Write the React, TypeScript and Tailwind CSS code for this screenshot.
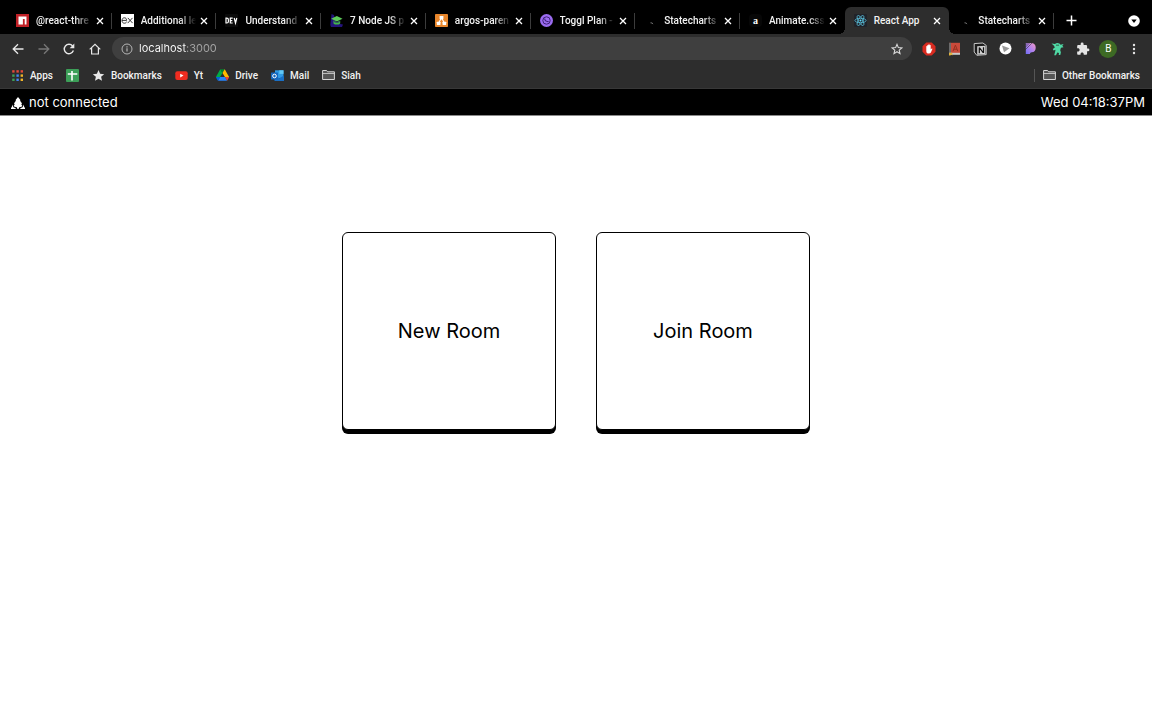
import type { ReactNode } from "react";

/* ---------- favicons ---------- */

const NpmIcon = () => (
  <svg viewBox="0 0 13 13" className="size-[13px]">
    <rect width="13" height="13" fill="#c12127" />
    <path d="M2.5 2.5h8v8H8.700V4.900H6.900v5.600H2.500z" fill="#fff" />
  </svg>
);

const ExpressIcon = () => (
  <svg viewBox="0 0 13 13" className="size-[13px]">
    <rect width="13" height="13" fill="#fff" />
    <path d="M1 6.400h4.600C5.600 4.600 4.700 3.800 3.400 3.800 1.900 3.800 1 4.900 1 6.500s.9 2.700 2.400 2.700c1.100 0 1.900-.5 2.200-1.500M6.800 3.900l4.800 5.200M11.500 3.900L6.700 9.100" fill="none" stroke="#222" strokeWidth=".9" />
  </svg>
);

const DevIcon = () => (
  <svg viewBox="0 0 13 13" className="size-[13px]">
    <rect width="13" height="13" rx="1" fill="#0b0b0b" />
    <path d="M1 4.200v4.800h.8c1.100 0 1.600-.6 1.600-1.500V5.700c0-.9-.5-1.500-1.600-1.500zM7.700 4.200H5.300v4.800h2.400M5.300 6.600h2M9.200 4l1.300 5 1.300-5" fill="none" stroke="#fff" strokeWidth="1.200" />
  </svg>
);

const NodeCourseIcon = () => (
  <svg viewBox="0 0 13 13" className="size-[13px]">
    <path d="M1.500 0L4 1l2 8 7 1.500-1 2.500H1L.3 11z" fill="#24137a" />
    <path d="M6.800 2l5.700 2.700-5.700 2.700-5.600-2.700z" fill="#5ecb5a" />
    <path d="M3.500 6.400l3.300 1.500 3.400-1.500v3c-1.500 1.600-5.200 1.600-6.700 0z" fill="#43b649" />
    <path d="M4 7.500c1.600 1 4.200 1 5.700 0" fill="none" stroke="#24137a" strokeWidth=".8" />
  </svg>
);

const DrawioIcon = () => (
  <svg viewBox="0 0 13 13" className="size-[13px]">
    <rect width="13" height="13" rx=".8" fill="#e8862b" />
    <path d="M6.500 4L3.500 9M6.500 4l3 5" stroke="#fff" strokeWidth="1.100" />
    <rect x="4.600" y="2" width="3.800" height="3.200" rx=".4" fill="#fff" />
    <rect x="1.800" y="7.800" width="3.700" height="3.200" rx=".4" fill="#fff" />
    <rect x="7.500" y="7.800" width="3.700" height="3.200" rx=".4" fill="#fff" />
  </svg>
);

const TogglIcon = () => (
  <svg viewBox="0 0 13 13" className="size-[13px]">
    <circle cx="6.500" cy="6.500" r="6.500" fill="#9b6cf0" />
    <circle cx="6.500" cy="6.500" r="3.700" fill="none" stroke="#3f2177" strokeWidth="1" />
    <path d="M4.600 4.500c.3 2.200 1.700 3.200 4 3.100" fill="none" stroke="#3f2177" strokeWidth="1.100" />
  </svg>
);

const LoadingIcon = () => (
  <svg viewBox="0 0 13 13" className="size-[13px]">
    <path d="M6.500 8.800q1.800-.2 2.600 1.200" fill="none" stroke="#777" strokeWidth="1" />
  </svg>
);

const AnimateIcon = () => (
  <span className="flex size-[13px] items-center justify-center rounded-sm bg-[#070707] font-['Liberation_Serif',serif] text-[10px] leading-none font-bold text-white">
    a
  </span>
);

const ReactIcon = () => (
  <svg viewBox="0 0 13 13" className="size-[13px]">
    <rect width="13" height="13" rx="1" fill="#20232a" />
    <g fill="none" stroke="#5bc4e0" strokeWidth=".75">
      <ellipse cx="6.500" cy="6.500" rx="5.600" ry="2.200" />
      <ellipse cx="6.500" cy="6.500" rx="5.600" ry="2.200" transform="rotate(60 6.500 6.500)" />
      <ellipse cx="6.500" cy="6.500" rx="5.600" ry="2.200" transform="rotate(120 6.500 6.500)" />
    </g>
    <circle cx="6.500" cy="6.500" r="1" fill="#61dafb" />
  </svg>
);

/* ---------- tabs ---------- */

type TabInfo = { title: string; icon: ReactNode; active?: boolean; divider?: boolean };

const tabs: TabInfo[] = [
  { title: "@react-thre", icon: <NpmIcon />, divider: true },
  { title: "Additional le", icon: <ExpressIcon />, divider: true },
  { title: "Understand", icon: <DevIcon />, divider: true },
  { title: "7 Node JS p", icon: <NodeCourseIcon />, divider: true },
  { title: "argos-paren", icon: <DrawioIcon />, divider: true },
  { title: "Toggl Plan -", icon: <TogglIcon />, divider: true },
  { title: "Statecharts", icon: <LoadingIcon />, divider: true },
  { title: "Animate.css", icon: <AnimateIcon /> },
  { title: "React App", icon: <ReactIcon />, active: true },
  { title: "Statecharts", icon: <LoadingIcon />, divider: true },
];

const Tab = ({ title, icon, active, divider }: TabInfo) => (
  <div
    role="tab"
    aria-selected={!!active}
    className={`relative flex h-[27px] min-w-0 flex-1 items-center pl-[9px] ${active ? "rounded-t-[6px] bg-[#2d2d2d]" : ""}`}
  >
    {active && (
      <>
        <span className="absolute bottom-0 -left-[6px] size-[6px] bg-[radial-gradient(circle_at_0_0,transparent_6px,#2d2d2d_6px)]" />
        <span className="absolute -right-[6px] bottom-0 size-[6px] bg-[radial-gradient(circle_at_100%_0,transparent_6px,#2d2d2d_6px)]" />
      </>
    )}
    <span className="shrink-0">{icon}</span>
    <span
      className={`ml-[7px] min-w-0 flex-1 whitespace-nowrap ${active ? "" : "[mask-image:linear-gradient(to_right,#000_70%,transparent)]"}`}
    >
      {title}
    </span>
    <button type="button" aria-label={`Close ${title}`} className="mr-1 ml-px flex size-[14px] shrink-0 items-center justify-center">
      <svg viewBox="0 0 8 8" className="size-2">
        <path d="M1 1l6 6M7 1L1 7" stroke="#fff" strokeWidth="1.300" />
      </svg>
    </button>
    <span className={`h-4 w-px shrink-0 ${divider ? "bg-[#3c3c3c]" : ""}`} />
  </div>
);

/* ---------- toolbar ---------- */

const ToolButton = ({ label, children }: { label: string; children: ReactNode }) => (
  <button type="button" aria-label={label} className="flex items-center justify-center">
    {children}
  </button>
);

const Nav = () => (
  <div className="grid w-[103px] shrink-0 grid-cols-4">
    <ToolButton label="Back">
      <svg viewBox="0 0 12 12" className="size-3" fill="none" stroke="#e8e8e8" strokeWidth="1.300">
        <path d="M11.500 6H1.500M6 1.200L1.200 6 6 10.800" />
      </svg>
    </ToolButton>
    <ToolButton label="Forward">
      <svg viewBox="0 0 12 12" className="size-3" fill="none" stroke="#777" strokeWidth="1.300">
        <path d="M.5 6h10M6 1.200L10.800 6 6 10.800" />
      </svg>
    </ToolButton>
    <ToolButton label="Reload">
      <svg viewBox="0 0 12 12" className="size-3" fill="none" stroke="#e8e8e8" strokeWidth="1.400">
        <path d="M10.400 7.600A4.700 4.700 0 1 1 9.600 3" />
        <path d="M11.300.6v4.600H6.700z" fill="#e8e8e8" stroke="none" />
      </svg>
    </ToolButton>
    <ToolButton label="Home">
      <svg viewBox="0 0 12 12" className="size-3" fill="none" stroke="#e8e8e8" strokeWidth="1.200">
        <path d="M.7 6.400L6 1.300l5.300 5.100M2.600 5v6h6.800V5" />
      </svg>
    </ToolButton>
  </div>
);

const Extensions = () => (
  <div className="grid w-[231px] shrink-0 grid-cols-9">
    <ToolButton label="Ad blocker">
      <svg viewBox="0 0 14 14" className="size-[14px]">
        <path d="M4.300.5h5.400l3.800 3.800v5.400l-3.800 3.800H4.300L.5 9.700V4.300z" fill="#d92b20" />
        <path d="M4.300 4.300q.5-.6 1 0V3.200q.5-.6 1.100 0v-.6q.6-.6 1.200 0v.7q.6-.6 1.100 0V7.500l1-1q.9-.2.700.6L8.900 10.600q-.6.900-2 .9-2.600 0-2.600-2.600z" fill="#fff" />
      </svg>
    </ToolButton>
    <ToolButton label="Dictionary">
      <svg viewBox="0 0 13 14" className="h-[14px] w-[13px]">
        <rect x="1" y=".8" width="11" height="10.200" fill="#c94a3b" />
        <rect x="1" y=".8" width="2" height="12" fill="#6b6b6b" />
        <rect x="1.500" y="10.800" width="10.500" height="2" fill="#c9c9c9" />
        <path d="M1 10.800h3.300v2.700l-1-.7-1 .7H1z" fill="#e2b33c" />
        <path d="M5 9.200l2.400-6 2.400 6M5.800 7.200h3.200" fill="none" stroke="#96301f" strokeWidth="1" />
      </svg>
    </ToolButton>
    <ToolButton label="Notion">
      <svg viewBox="0 0 14 14" className="size-[14px]">
        <path d="M1.200 1.600L9.900 1l3.300 2.400v9.200l-9.400.7L1.200 10z" fill="#1c1c1c" stroke="#d8d8d8" strokeWidth=".9" />
        <path d="M4.200 4.300l8.300-.5v8.300l-8.300.6z" fill="#d0d0d0" />
        <path d="M6.300 5.500l3.900 5.200M6.300 5.500v5.800M10.500 5.300v5.600" fill="none" stroke="#111" strokeWidth="1.200" />
      </svg>
    </ToolButton>
    <ToolButton label="Player">
      <svg viewBox="0 0 13 13" className="size-[13px]">
        <circle cx="6.500" cy="6.500" r="6" fill="#fff" />
        <path d="M3 3.500l7.500 2.800L5 10.300z" fill="#999" />
      </svg>
    </ToolButton>
    <ToolButton label="Pattern">
      <svg viewBox="0 0 12 13" className="h-[13px] w-3">
        <defs>
          <linearGradient id="patternFill" x1="1" y1="0" x2="0" y2="1">
            <stop offset="0" stopColor="#f59ac0" />
            <stop offset=".5" stopColor="#b282ee" />
            <stop offset="1" stopColor="#6f6df2" />
          </linearGradient>
        </defs>
        <path d="M.8 1h5.900a4.700 4.700 0 0 1 0 9.300Q5 10.500 4.800 12H.8z" fill="url(#patternFill)" />
        <path d="M0 5.500L5 .5M0 8L7 1M.5 3L3 .5" stroke="#2d2d2d" strokeWidth=".6" />
      </svg>
    </ToolButton>
    <ToolButton label="Ninja">
      <svg viewBox="0 0 13 14" className="h-[14px] w-[13px]">
        <path d="M.5 1.500l3.500.4Q6 .5 8.400 1.600l1.200 1.200 3-.8-1.300 1.800 1.200 1.500-2.600.4-.7 2.600.7 2-.6 2.700H7.700l.3-2-1.700-.5-1.300 2.700H3.200l1-3.700.3-1.800-2 .8-.7-1.400 2-1.600L3 3.700z" fill="#4fd8a4" />
        <path d="M5 3.200h3" stroke="#2d2d2d" strokeWidth=".7" />
      </svg>
    </ToolButton>
    <ToolButton label="Extensions">
      <svg viewBox="0 0 24 24" className="size-[14px]" fill="#e4e4e4">
        <path d="M20.500 11H19V7c0-1.100-.9-2-2-2h-4V3.500a2.500 2.500 0 0 0-5 0V5H4c-1.100 0-1.990.9-1.990 2v3.800H3.500c1.490 0 2.700 1.210 2.700 2.700s-1.210 2.700-2.700 2.700H2V20c0 1.100.9 2 2 2h3.800v-1.500c0-1.490 1.210-2.700 2.700-2.700 1.490 0 2.700 1.210 2.700 2.700V22H17c1.100 0 2-.9 2-2v-4h1.500a2.500 2.500 0 0 0 0-5z" />
      </svg>
    </ToolButton>
    <button type="button" aria-label="Profile" className="flex items-center justify-center">
      <span className="flex size-[18px] items-center justify-center rounded-full bg-[#3d6a24] text-[10px] font-normal text-white">B</span>
    </button>
    <ToolButton label="Menu">
      <svg viewBox="0 0 4 12" className="h-3 w-1" fill="#e4e4e4">
        <circle cx="2" cy="2" r="1.200" />
        <circle cx="2" cy="6" r="1.200" />
        <circle cx="2" cy="10" r="1.200" />
      </svg>
    </ToolButton>
  </div>
);

/* ---------- bookmarks ---------- */

const FolderIcon = () => (
  <svg viewBox="0 0 13 12" className="h-3 w-[13px]">
    <path d="M.6 10.500V1.500h4l1 1.300h6.800v7.700z" fill="#555" stroke="#d5d5d5" strokeWidth="1" strokeLinejoin="round" />
    <path d="M.6 4.500h11.800" stroke="#d5d5d5" strokeWidth=".8" />
  </svg>
);

const appDots = ["#e5493a", "#e5493a", "#e5493a", "#3f9f55", "#4385f0", "#f0b429", "#3f9f55", "#4385f0", "#f0b429"];

const bookmarks: { name: string; label?: string; icon: ReactNode }[] = [
  {
    name: "Apps",
    label: "Apps",
    icon: (
      <svg viewBox="0 0 13 13" className="size-[13px]">
        {appDots.map((fill, i) => (
          <rect key={i} x={1.2 + (i % 3) * 4.2} y={1.2 + Math.floor(i / 3) * 4.2} width="2.400" height="2.400" fill={fill} />
        ))}
      </svg>
    ),
  },
  {
    name: "Sheets",
    icon: (
      <svg viewBox="0 0 13 13" className="size-[13px]">
        <rect width="13" height="13" rx="1" fill="#3c9f58" />
        <path d="M6 2v9.500M1.800 5h9.500" stroke="#fff" strokeWidth="1.600" />
      </svg>
    ),
  },
  {
    name: "Bookmarks",
    label: "Bookmarks",
    icon: (
      <svg viewBox="0 0 24 24" className="size-[13px]" fill="#e8e8e8">
        <path d="M12 17.800l6.500 4-1.700-7.400 5.700-4.900-7.500-.7L12 2 9 8.800l-7.500.7 5.700 4.900-1.700 7.400z" />
      </svg>
    ),
  },
  {
    name: "YouTube",
    label: "Yt",
    icon: (
      <svg viewBox="0 0 13 13" className="size-[13px]">
        <rect x=".3" y="2.200" width="12.400" height="8.800" rx="2" fill="#f02c20" />
        <path d="M5.200 4.700v3.800l3.300-1.900z" fill="#fff" />
      </svg>
    ),
  },
  {
    name: "Drive",
    label: "Drive",
    icon: (
      <svg viewBox="0 0 87 78" className="h-3 w-[13px]">
        <path d="M6.600 66.850l3.850 6.650c.8 1.400 1.950 2.500 3.300 3.300l13.750-23.800H0c0 1.550.4 3.100 1.200 4.500z" fill="#0066da" />
        <path d="M43.650 25L29.900 1.200c-1.350.8-2.500 1.900-3.300 3.300L1.200 48.500A9 9 0 0 0 0 53h27.500z" fill="#00ac47" />
        <path d="M73.550 76.800c1.350-.8 2.500-1.900 3.300-3.300l1.600-2.750L86.100 57.500c.8-1.400 1.200-2.950 1.200-4.500H59.800l5.850 11.500z" fill="#ea4335" />
        <path d="M43.650 25L57.400 1.200C56.050.4 54.500 0 52.900 0H34.400c-1.600 0-3.150.45-4.500 1.200z" fill="#00832d" />
        <path d="M59.800 53H27.500L13.750 76.800c1.350.8 2.900 1.200 4.500 1.200h50.800c1.600 0 3.150-.45 4.500-1.200z" fill="#2684fc" />
        <path d="M73.400 26.500L60.700 4.500c-.8-1.400-1.950-2.500-3.300-3.300L43.650 25 59.800 53h27.450c0-1.550-.4-3.100-1.200-4.500z" fill="#ffba00" />
      </svg>
    ),
  },
  {
    name: "Mail",
    label: "Mail",
    icon: (
      <svg viewBox="0 0 13 13" className="size-[13px]">
        <rect x="4" y="1.300" width="8.500" height="7.700" fill="#2f9be6" />
        <rect x="8.300" y="1.300" width="4.200" height="3.600" fill="#62c8f5" />
        <path d="M3.500 6.500l4.800 2.700L13 6.500V12H3.500z" fill="#1a6fc4" />
        <rect x="0" y="3.500" width="7" height="7" rx=".6" fill="#1466bd" />
        <circle cx="3.500" cy="7" r="1.800" fill="none" stroke="#fff" strokeWidth="1" />
      </svg>
    ),
  },
  { name: "Siah", label: "Siah", icon: <FolderIcon /> },
];

const Bookmark = ({ name, label, icon }: { name: string; label?: string; icon: ReactNode }) => (
  <a href="#" aria-label={name} className="flex items-center gap-[6px] whitespace-nowrap">
    {icon}
    {label && <span>{label}</span>}
  </a>
);

/* ---------- page ---------- */

const Browser = () => (
  <div className="bg-[#2d2d2d] font-['Roboto',sans-serif] text-[10px] font-medium text-[#f2f2f2]">
    <div className="flex items-end bg-black pt-[7px] pl-[7px]">
      <div role="tablist" className="flex min-w-0 flex-1">
        {tabs.map((tab, i) => (
          <Tab key={i} {...tab} />
        ))}
      </div>
      <div className="flex h-[27px] w-[98px] shrink-0 items-center justify-between pr-3 pl-3">
        <button type="button" aria-label="New tab">
          <svg viewBox="0 0 11 11" className="size-[11px]">
            <path d="M5.500.5v10M.5 5.500h10" stroke="#fff" strokeWidth="1.500" />
          </svg>
        </button>
        <button type="button" aria-label="Search tabs">
          <svg viewBox="0 0 12 12" className="size-3">
            <circle cx="6" cy="6" r="5.800" fill="#fff" />
            <path d="M3.300 4.600h5.400L6 7.900z" fill="#000" />
          </svg>
        </button>
      </div>
    </div>

    <div className="flex items-stretch gap-1 px-[5px] pt-[3px]">
      <Nav />
      <div className="flex h-[23px] min-w-0 flex-1 items-center rounded-full bg-[#3f3f3f] pr-[9px] pl-[9px]">
        <svg viewBox="0 0 12 12" className="size-3 shrink-0" fill="none" stroke="#b5b5b5">
          <circle cx="6" cy="6" r="5" strokeWidth="1" />
          <path d="M6 5.300v3.300M6 3.200v1.200" strokeWidth="1.200" />
        </svg>
        <input
          aria-label="Address"
          defaultValue="localhost:3000"
          className="ml-[6px] min-w-0 flex-1 bg-[linear-gradient(to_right,#ffffff_48px,#a6a6a6_48px)] bg-clip-text font-['Inter',sans-serif] text-[11px] font-normal text-transparent outline-none"
        />
        <button type="button" aria-label="Bookmark this page">
          <svg viewBox="0 0 24 24" className="size-3" fill="none" stroke="#dadada" strokeWidth="2.200">
            <path d="M12 17.500l6 3.800-1.600-6.900 5.300-4.600-7-.6L12 2.700 9.300 9.200l-7 .6 5.300 4.600L6 21.300z" />
          </svg>
        </button>
      </div>
      <Extensions />
    </div>

    <nav className="flex h-[29px] items-center justify-between border-b border-[#383838] pt-[2px] pr-3 pl-[11px]">
      <div className="flex items-center gap-[13px]">
        {bookmarks.map((b) => (
          <Bookmark key={b.name} {...b} />
        ))}
      </div>
      <div className="flex items-center gap-2">
        <span className="h-[13px] w-px bg-[#555]" />
        <Bookmark name="Other Bookmarks" label="Other Bookmarks" icon={<FolderIcon />} />
      </div>
    </nav>
  </div>
);

const RoomCard = ({ label }: { label: string }) => (
  <button
    type="button"
    className="flex h-[198px] w-[214px] items-center justify-center rounded-[6px] border border-black bg-white text-[20px] text-black shadow-[0_4px_0_#000]"
  >
    {label}
  </button>
);

export default function App() {
  return (
    <div className="min-h-screen bg-white">
      <Browser />
      <div className="font-['Inter',sans-serif]">
        <header className="flex h-[27px] items-center justify-between border-b border-[#8a8a8a] bg-black pt-[2px] pr-[7px] pl-[11px] text-[13px] text-white">
          <div className="flex items-center gap-1">
            <svg viewBox="0 0 14 12" className="h-3 w-[14px]" fill="#fff">
              <path d="M7 0l2.600 3.200-.7.300 2.200 3-.9.400 1.300 2.400-2.600.9H8v1.600H6v-1.600H5.100l-2.600-.9 1.300-2.400-.9-.4 2.200-3-.7-.3z" />
              <path d="M2 7.500v2.600l2.700 1.200V12H0v-.8zM12 7.500v2.600l-2.700 1.200V12H14v-.8z" />
            </svg>
            <span>not connected</span>
          </div>
          <time>Wed 04:18:37PM</time>
        </header>
        <main className="flex flex-wrap justify-center gap-10 px-6 pt-[116px] pb-10">
          <RoomCard label="New Room" />
          <RoomCard label="Join Room" />
        </main>
      </div>
    </div>
  );
}
